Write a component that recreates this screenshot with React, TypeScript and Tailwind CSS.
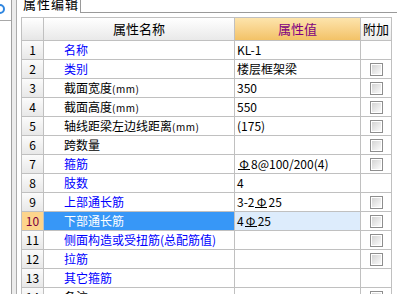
import React from "react";

type Row = {
  name: string;
  value?: React.ReactNode;
  blue?: boolean;
  check?: boolean;
};

// steel bar grade glyph
const Bar = () => (
  <span className="inline-block w-[12px] text-center leading-[11px] border-b border-black mx-px">Φ</span>
);

const rows: Row[] = [
  { name: "名称", value: "KL-1", blue: true },
  { name: "类别", value: "楼层框架梁", blue: true, check: true },
  { name: "截面宽度(mm)", value: "350", check: true },
  { name: "截面高度(mm)", value: "550", check: true },
  { name: "轴线距梁左边线距离(mm)", value: "(175)", check: true },
  { name: "跨数量", check: true },
  {
    name: "箍筋",
    value: (
      <>
        <Bar />8@100/200(4)
      </>
    ),
    blue: true,
    check: true,
  },
  { name: "肢数", value: "4", blue: true },
  {
    name: "上部通长筋",
    value: (
      <>
        3-2<Bar />25
      </>
    ),
    blue: true,
    check: true,
  },
  {
    name: "下部通长筋",
    value: (
      <>
        4<Bar />25
      </>
    ),
    blue: true,
    check: true,
  },
  { name: "侧面构造或受扭筋(总配筋值)", blue: true, check: true },
  { name: "拉筋", blue: true, check: true },
  { name: "其它箍筋", blue: true },
  { name: "备注", check: true },
];

const Checkbox = () => (
  <div className="w-[13px] h-[13px] border border-[#8e8e8e] bg-white p-px">
    <div className="w-full h-full bg-gradient-to-br from-[#d4d4d4] to-[#fbfbfb]" />
  </div>
);

// the unit suffix is drawn narrower, like the old bitmap font
function Name({ text }: { text: string }) {
  if (!text.endsWith("(mm)")) return <>{text}</>;
  return (
    <>
      {text.slice(0, -4)}
      <span className="text-[10px] tracking-[0.5px]">(mm)</span>
    </>
  );
}

export default function App() {
  const selected = 9;

  return (
    <div className="w-[397px] h-[294px] overflow-hidden bg-white flex text-[12px] text-black font-['Noto_Sans_CJK_SC','Noto_Sans',sans-serif]">
      {/* left pane edge */}
      <div className="w-[11px] shrink-0 flex flex-col">
        <div className="h-[20px] pt-[4px]">
          <svg width="11" height="10" viewBox="0 0 11 10">
            <path d="M-4 1 A4 4 0 1 1 -4 9" fill="none" stroke="#2f86e0" strokeWidth="2" transform="translate(4 0)" />
          </svg>
        </div>
        <div className="h-px bg-[#a8a8a8]" />
      </div>
      <div className="w-px shrink-0 bg-[#a0a0a0]" />
      <div className="w-[4px] shrink-0 bg-[#ececec]" />
      <div className="w-px shrink-0 bg-[#acacac]" />

      {/* editor panel */}
      <div className="flex-1 flex flex-col min-w-0">
        {/* tab strip */}
        <div className="flex h-[13px] shrink-0">
          <div className="w-[64px] border-r border-[#9a9a9a] overflow-hidden">
            <div className="-mt-[4px] pl-[6px] text-[13px] leading-[16px] tracking-[1px]">属性编辑</div>
          </div>
          <div className="flex-1 flex flex-col justify-end">
            <div className="h-px bg-[#9a9a9a]" />
          </div>
        </div>

        <div className="pt-[4px] pl-[4px]">
          <div className="grid grid-cols-[22px_191px_126px_31px] w-[371px] border-l border-t border-[#c0c0c0]">
            {/* header */}
            <div className="h-[23px] border-r border-b border-[#c0c0c0] bg-gradient-to-b from-white to-[#e6e6e6]" />
            <div className="h-[23px] border-r border-b border-[#c0c0c0] bg-gradient-to-b from-white to-[#e9e9e9] flex items-center justify-center text-[13px]">
              属性名称
            </div>
            <div className="h-[23px] border-r border-b border-[#c0c0c0] bg-gradient-to-b from-[#fde4ac] to-[#f3c266] flex items-center justify-center text-[13px] text-[#800080]">
              属性值
            </div>
            <div className="h-[23px] border-r border-b border-[#c0c0c0] bg-gradient-to-b from-white to-[#ececec] flex items-center justify-center text-[13px]">
              附加
            </div>

            {rows.map((r, i) => {
              const sel = i === selected;
              return (
                <React.Fragment key={i}>
                  <div
                    className={
                      sel
                        ? "h-[19px] border-r border-b border-[#c0c0c0] bg-[#fdd58c] text-[#7a0040] flex items-center justify-center"
                        : "h-[19px] border-r border-b border-[#c0c0c0] bg-gradient-to-b from-[#fbfbfb] to-[#e8e8e8] flex items-center justify-center"
                    }
                  >
                    {i + 1}
                  </div>
                  <div
                    className={
                      sel
                        ? "h-[19px] border-r border-b border-[#c0c0c0] bg-[#3797f7] text-white pl-[20px] flex items-center whitespace-nowrap overflow-hidden"
                        : r.blue
                          ? "h-[19px] border-r border-b border-[#c0c0c0] text-[#0000ff] pl-[20px] flex items-center whitespace-nowrap overflow-hidden"
                          : "h-[19px] border-r border-b border-[#c0c0c0] pl-[20px] flex items-center whitespace-nowrap overflow-hidden"
                    }
                  >
                    <Name text={r.name} />
                  </div>
                  <div
                    className={
                      sel
                        ? "h-[19px] border-r border-b border-[#c0c0c0] bg-[#ddecfc] pl-[2px] flex items-center whitespace-nowrap overflow-hidden"
                        : "h-[19px] border-r border-b border-[#c0c0c0] pl-[2px] flex items-center whitespace-nowrap overflow-hidden"
                    }
                  >
                    {r.value}
                  </div>
                  <div className="h-[19px] border-r border-b border-[#c0c0c0] flex items-center justify-center pl-px">
                    {r.check && <Checkbox />}
                  </div>
                </React.Fragment>
              );
            })}
          </div>
        </div>
      </div>
    </div>
  );
}
